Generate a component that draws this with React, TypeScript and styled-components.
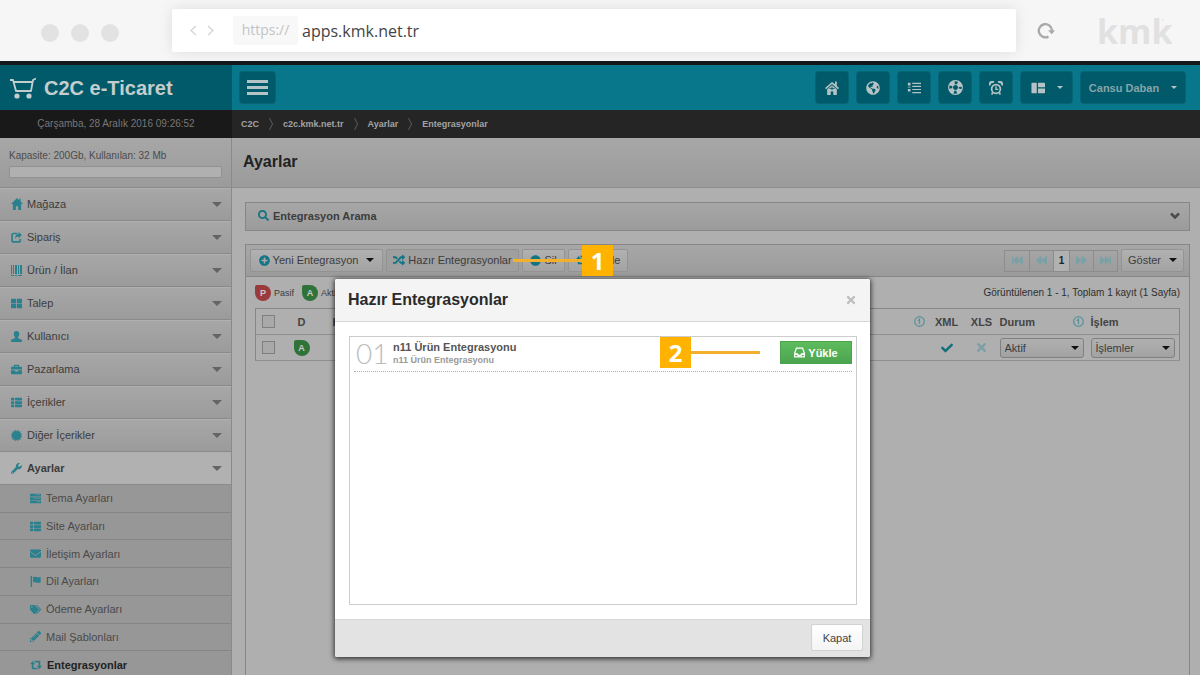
import React, { ReactNode, useState } from "react";
import styled, { createGlobalStyle, css } from "styled-components";
import {
  FaBackward, FaBriefcase, FaCertificate, FaCheck, FaEnvelope, FaFastBackward, FaFastForward,
  FaForward, FaGlobeAmericas, FaMinusCircle, FaPencilAlt, FaPlusCircle, FaRandom, FaSearch,
  FaTags, FaThLarge, FaThList, FaTimes, FaWrench,
} from "react-icons/fa";

const sans = '"Liberation Sans", Arial, sans-serif';
const human = '"Open Sans", "Noto Sans", sans-serif';
const teal = "#2b808d";

const GlobalStyle = createGlobalStyle`
  *, *::before, *::after { box-sizing: border-box; }
  html, body, #root { height: 100%; }
  body { margin: 0; font-family: ${sans}; font-size: 11px; line-height: 16px; color: #3c3c3c; background: #afafaf; overflow: hidden; }
  button, input, select { font: inherit; color: inherit; margin: 0; }
  button { cursor: pointer; padding: 0; border: 0; background: none; }
  a { color: inherit; text-decoration: none; }
  ul, ol { list-style: none; margin: 0; padding: 0; }
  h1, h2, h3, p { margin: 0; }
  svg { display: block; flex: none; }
`;

/* ---------- browser bar ---------- */

const Page = styled.div`
  position: relative;
  display: flex;
  flex-direction: column;
  min-height: 100%;
`;
const Browser = styled.header`
  display: flex;
  align-items: center;
  height: 65px;
  padding: 0 36px 0 41px;
  background: #f6f6f6;
  border-bottom: 4px solid #16191b;
`;
const Dots = styled.div`
  display: flex;
  gap: 12px;
  width: 131px;
  padding-top: 4px;
`;
const Dot = styled.span`
  width: 18px;
  height: 18px;
  border-radius: 50%;
  background: #e2e2e2;
`;
const Address = styled.div`
  flex: 1;
  display: flex;
  align-items: center;
  height: 43px;
  padding-left: 18px;
  background: #fff;
  border-radius: 2px;
  box-shadow: 0 0 14px rgba(0, 0, 0, 0.1);
`;
const History = styled.div`
  display: flex;
  gap: 10px;
  width: 43px;
  color: #d6d6d6;
`;
const Scheme = styled.span`
  height: 29px;
  width: 65px;
  text-align: center;
  border-radius: 3px;
  background: #f8f8f8;
  color: #c4c4c4;
  font: 14px/28px ${human};
`;
const Url = styled.input`
  flex: 1;
  min-width: 0;
  padding: 0 0 0 4px;
  border: 0;
  outline: 0;
  background: none;
  && { font: 16px/24px ${human}; color: #444; }
`;
const Reload = styled.button`
  width: 81px;
  padding-left: 21px;
  color: #a9a9a9;
`;
const Brand = styled.div`
  position: relative;
  width: 67px;
  color: #e1e1e1;
  font: bold 34px/44px ${human};
  &::after {
    content: "";
    position: absolute;
    top: 10px;
    right: 0;
    width: 2px;
    height: 2px;
    border-radius: 50%;
    background: #e6e6e6;
  }
`;

/* ---------- application frame ---------- */

const Frame = styled.div`
  flex: 1;
  display: grid;
  grid-template-columns: 232px minmax(0, 1fr);
  grid-template-rows: 45px 28px minmax(0, 1fr);
`;
const Logo = styled.div`
  display: flex;
  align-items: center;
  gap: 8px;
  padding-left: 9px;
  background: #015a69;
  color: #c3cdce;
  h1 { font-size: 20px; line-height: 24px; }
`;
const TopBar = styled.div`
  display: flex;
  align-items: center;
  gap: 9px;
  padding: 0 15px 0 8px;
  background: #08778b;
`;
const TopButton = styled.button<{ $w?: number; $push?: boolean }>`
  display: flex;
  align-items: center;
  justify-content: center;
  gap: 12px;
  width: ${(p) => p.$w ?? 32}px;
  height: 31px;
  border-radius: 3px;
  background: #015a69;
  box-shadow: 0 0 0 1px rgba(0, 70, 84, 0.35);
  && { color: #b4c3c5; font-weight: bold; }
  ${(p) => p.$push && css`margin-right: auto;`}
`;
const UserName = styled.span`
  color: #87a4a9;
`;
const Caret = styled.span<{ $size?: number }>`
  flex: none;
  width: 0;
  height: 0;
  border: ${(p) => p.$size ?? 4}px solid transparent;
  border-top-color: currentColor;
  border-bottom: 0;
`;
const Clock = styled.div`
  padding: 6px 0;
  background: #191919;
  color: #777;
  font-size: 10px;
  text-align: center;
`;
const Crumbs = styled.nav`
  display: flex;
  align-items: center;
  gap: 10px;
  padding-left: 9px;
  background: #252525;
  color: #a3a3a3;
  font-size: 9px;
  font-weight: bold;
  svg { color: #5c5c5c; }
`;

/* ---------- sidebar ---------- */

const grad = "linear-gradient(#a7a7a7, #9b9b9b)";

const Sidebar = styled.aside`
  border-right: 1px solid #8a8a8a;
`;
const Capacity = styled.div`
  height: 50px;
  padding: 10px 9px 0;
  background: ${grad};
  border-bottom: 1px solid #8a8a8a;
  color: #4c4c4c;
  font-size: 10px;
`;
const Meter = styled.div`
  height: 12px;
  margin-top: 2px;
  border: 1px solid #929292;
  border-radius: 2px;
  background: #b0b0b0;
`;
const MenuLink = styled.a<{ $open?: boolean }>`
  display: grid;
  grid-template-columns: 11px 1fr auto;
  align-items: center;
  gap: 5px;
  height: 33px;
  padding: 0 9px 1px 11px;
  border-top: 1px solid #b0b0b0;
  border-bottom: 1px solid #8a8a8a;
  background: ${grad};
  svg { color: ${teal}; }
  span:last-child { color: #646464; }
  ${(p) => p.$open && css`
    font-weight: bold;
    background: #b1b1b1;
  `}
`;
const SubMenu = styled.ul`
  display: grid;
  grid-auto-rows: 1fr;
  height: 194px;
  background: #979797;
`;
const SubLink = styled.a<{ $active?: boolean }>`
  display: flex;
  align-items: center;
  gap: 5px;
  height: 100%;
  padding-left: 30px;
  border-bottom: 1px solid #858585;
  color: #4a4a4a;
  svg { color: ${teal}; }
  ${(p) => p.$active && css`
    color: #222;
    font-weight: bold;
  `}
`;

/* ---------- content ---------- */

const Main = styled.main`
  display: flex;
  flex-direction: column;
`;
const Heading = styled.div`
  height: 50px;
  padding: 12px 11px;
  background: ${grad};
  border-bottom: 1px solid #8f8f8f;
  color: #222;
  h2 { font-size: 16px; line-height: 24px; }
`;
const Content = styled.div`
  flex: 1;
  display: flex;
  flex-direction: column;
  gap: 13px;
  padding: 14px 10px 0 13px;
`;
const SearchPanel = styled.button`
  display: flex;
  align-items: center;
  gap: 4px;
  height: 29px;
  padding: 0 9px 2px 12px;
  border: 1px solid #868686;
  background: ${grad};
  && { font-weight: bold; }
  svg { color: #0f7383; }
  svg:last-child { margin-left: auto; color: #4c4c4c; }
`;
const ListPanel = styled.section`
  flex: 1;
  border: 1px solid #868686;
  border-bottom: 0;
`;
const Toolbar = styled.div`
  display: flex;
  align-items: center;
  gap: 3px;
  height: 32px;
  padding: 0 5px 0 4px;
  background: ${grad};
  border-bottom: 1px solid #868686;
`;
const ToolButton = styled.button<{ $w: number; $flat?: boolean }>`
  display: flex;
  align-items: center;
  justify-content: center;
  gap: 3px;
  width: ${(p) => p.$w}px;
  height: 23px;
  padding-bottom: 1px;
  border: 1px solid #939393;
  border-radius: 2px;
  background: ${(p) => (p.$flat ? "#9f9f9f" : "linear-gradient(#b1b1b1, #a3a3a3)")};
  svg { color: #127484; }
  span:last-child:not(:only-of-type) { margin-left: 5px; color: #111; }
`;
const Anchor = styled.div`
  position: relative;
  z-index: 1;
`;
const Pager = styled.div`
  display: flex;
  margin-left: auto;
  border: 1px solid #8c8c8c;
`;
const PagerButton = styled.button<{ $current?: boolean }>`
  display: grid;
  place-items: center;
  width: ${(p) => (p.$current ? 16 : 24)}px;
  height: 20px;
  border-left: 1px solid #8c8c8c;
  &:first-child { border-left: 0; }
  && { color: #7ba0a6; }
  ${(p) => p.$current && css`
    background: #b1b1b1;
    && { color: #222; font-size: 10px; font-weight: bold; }
  `}
`;
const Legend = styled.div`
  display: flex;
  align-items: center;
  gap: 3px;
  height: 31px;
  padding: 0 9px;
  font-size: 10px;
  span + i { margin-left: 5px; }
  p { margin-left: auto; color: #2e2e2e; }
`;
const Badge = styled.i<{ $tone: string }>`
  display: grid;
  place-items: center;
  width: 16px;
  height: 16px;
  border-radius: 2px 8px 8px 8px;
  background: ${(p) => p.$tone};
  color: #c8c8c8;
  font: bold 9px/16px ${sans};
`;
const LegendText = styled.span`
  font-size: 9px;
`;
const Grid = styled.table`
  width: calc(100% - 18px);
  margin: 0 9px;
  border-collapse: collapse;
  table-layout: fixed;
  border: 1px solid #868686;
  th, td { padding: 0; height: 26px; text-align: left; border-bottom: 1px solid #8f8f8f; }
  th { color: #444; }
`;
const Center = styled.div`
  display: flex;
  justify-content: center;
`;
const HeadCell = styled.div`
  display: flex;
  align-items: center;
  justify-content: space-between;
  padding: 0 7px 0 0;
`;
const NameHead = styled.div`
  padding-left: 11px;
`;
const Tick = styled.input`
  appearance: none;
  display: block;
  width: 13px;
  height: 13px;
  && { margin: 0 auto 0 6px; }
  border: 1px solid #7f7f7f;
  background: #a9a9a9;
`;
const Picker = styled.div`
  display: grid;
  align-items: center;
  width: 84px;
  > * { grid-area: 1 / 1; }
  > span { justify-self: end; margin-right: 5px; color: #111; pointer-events: none; }
`;
const Select = styled.select`
  appearance: none;
  width: 100%;
  height: 20px;
  padding: 0 4px;
  border: 1px solid #808080;
  border-radius: 3px;
  background: linear-gradient(#b0b0b0, #a2a2a2);
`;

/* ---------- dialog ---------- */

const Layer = styled.div`
  position: absolute;
  inset: 0;
  display: flex;
  justify-content: center;
  align-items: flex-start;
  padding: 279px 0 0 5px;
`;
const Dialog = styled.section`
  width: 535px;
  background: #fff;
  border-radius: 2px;
  box-shadow: 0 1px 5px 1px rgba(0, 0, 0, 0.7);
`;
const DialogHead = styled.header`
  display: flex;
  justify-content: space-between;
  align-items: center;
  height: 43px;
  padding: 0 13px;
  border-bottom: 1px solid #d6d6d6;
  border-radius: 2px 2px 0 0;
  background: #f4f4f4;
  color: #2b2b2b;
  h3 { font-size: 16px; line-height: 24px; }
  svg { color: #bdbdbd; }
`;
const DialogBody = styled.div`
  padding: 14px 13px 14px 14px;
`;
const Items = styled.ol`
  height: 269px;
  padding: 2px 4px;
  border: 1px solid #ccc;
`;
const Item = styled.li`
  display: grid;
  grid-template-columns: 33px 1fr auto;
  align-items: start;
  gap: 6px;
  height: 33px;
  padding-top: 2px;
  border-bottom: 1px dotted #b0b0b0;
`;
const Index = styled.span`
  padding-left: 2px;
  color: #bdbdbd;
  font: 300 28px/24px Lato, sans-serif;
`;
const ItemText = styled.div`
  color: #555;
  font-weight: bold;
  line-height: 13px;
  small { display: block; color: #999; font-size: 9px; }
`;
const LoadButton = styled.button`
  display: flex;
  align-items: center;
  justify-content: center;
  gap: 3px;
  width: 72px;
  height: 23px;
  border: 1px solid #4ba34e;
  background: linear-gradient(#5dbb5d, #4ca550);
  && { color: #fff; font-weight: bold; }
`;
const DialogFoot = styled.footer`
  display: flex;
  justify-content: flex-end;
  align-items: center;
  height: 38px;
  padding: 0 7px 2px;
  border-top: 1px solid #d8d8d8;
  border-radius: 0 0 2px 2px;
  background: #e3e3e3;
`;
const CloseButton = styled.button`
  width: 52px;
  height: 27px;
  border: 1px solid #d2d2d2;
  border-radius: 2px;
  background: linear-gradient(#fff, #f4f4f4);
  && { color: #444; }
`;

/* ---------- numbered callouts ---------- */

const Callout = styled.div<{ $x: number; $flip?: boolean }>`
  position: absolute;
  top: -4px;
  left: ${(p) => p.$x}px;
  display: flex;
  flex-direction: ${(p) => (p.$flip ? "row-reverse" : "row")};
  align-items: center;
  pointer-events: none;
  b {
    width: 31px;
    height: 31px;
    background: #ffb300;
    color: #fff;
    font: bold 24px/31px ${human};
    text-align: center;
  }
  &::before {
    content: "";
    width: 69px;
    height: 3px;
    background: #f2b02c;
  }
`;

/* ---------- drawings ---------- */

const Svg = ({ s = 14, box = 16, children }: { s?: number; box?: number; children: ReactNode }) => (
  <svg width={s} height={s} viewBox={`0 0 ${box} ${box}`} fill="currentColor" aria-hidden="true">{children}</svg>
);
const CartIcon = () => (
  <svg width="27" height="22" viewBox="0 0 27 22" fill="none" stroke="currentColor" strokeWidth="1.800" aria-hidden="true">
    <path d="M1 3h3l3 11h15L24 3l3-1.500M5 5h18" strokeLinejoin="round" />
    <circle cx="8" cy="19" r="2.600" fill="currentColor" stroke="none" />
    <circle cx="20" cy="19" r="2.600" fill="currentColor" stroke="none" />
  </svg>
);
const BarsIcon = () => (
  <svg width="21" height="15" viewBox="0 0 21 15" fill="#b4c3c5" aria-hidden="true">
    <path d="M0 0h21v3H0zM0 6h21v3H0zM0 12h21v3H0z" />
  </svg>
);
const HouseIcon = () => (
  <Svg><path d="M8 1 0 8l1.200 1.300L8 3.400l6.800 5.900L16 8l-2.500-2.300V.5h-2v3.300z" /><path d="M8 4.800 2.500 9.500V16h4v-4h3v4h4V9.500z" /><path d="M5 8.500h6M8 6.500v4" stroke="#015a69" /></Svg>
);
const ListIcon = () => (
  <Svg><path d="M1 2h3v3H1zM1 9h3v3H1zM6 2h10v1.400H6zM6 5.500h10v1.400H6zM1 6.500h3v.8H1zM6 9h10v1.400H6zM6 12.500h10v1.400H6z" /></Svg>
);
const BuoyIcon = () => (
  <svg width="15" height="15" viewBox="0 0 16 16" fill="none" stroke="currentColor" aria-hidden="true">
    <circle cx="8" cy="8" r="7.300" strokeWidth="1.200" />
    <circle cx="8" cy="8" r="3.200" strokeWidth="1" />
    <circle cx="8" cy="8" r="5.300" strokeWidth="4.500" strokeDasharray="5.200 3.125" strokeDashoffset="-1.560" />
  </svg>
);
const AlarmIcon = () => (
  <svg width="14" height="14" viewBox="0 0 16 16" fill="none" stroke="currentColor" strokeWidth="2" aria-hidden="true">
    <circle cx="8" cy="9" r="5" />
    <path d="M8 6v3.500h2.500" strokeWidth="1.500" />
    <path d="M4.500 13 3 15.500M11.500 13l1.500 2.500" />
    <path d="M1 5a3 3 0 0 1 4.500-3.500M15 5a3 3 0 0 0-4.500-3.500" strokeWidth="2.500" />
  </svg>
);
const LayoutIcon = () => (
  <Svg><path d="M1 2h5a.6.6 0 0 1 .6.6V14H1.500A1 1 0 0 1 .5 13V2.500zM8 2h7a1 1 0 0 1 1 1v4H8zM8 8.500h8V13a1 1 0 0 1-1 1H8z" /></Svg>
);
const HomeIcon = () => (
  <Svg s={12}><path d="M8 0 0 8h2.500v8h4v-5h3v5h4V8H16l-3-3V1h-2v2z" /></Svg>
);
const ShareIcon = () => (
  <svg width="11" height="11" viewBox="0 0 16 16" aria-hidden="true">
    <path d="M9 2.200H4a2.500 2.500 0 0 0-2.500 2.500V12A2.500 2.500 0 0 0 4 14.500h7A2.500 2.500 0 0 0 13.500 12v-2" fill="none" stroke="currentColor" strokeWidth="2.500" />
    <path d="M11 0l5 4.500L11 9V6.500C8.500 6.500 7 7.500 6 10 5.500 6 7.500 3 11 2.500z" fill="currentColor" />
  </svg>
);
const BarcodeIcon = () => (
  <svg width="11" height="11" viewBox="0 0 11 11" fill="currentColor" aria-hidden="true">
    <path d="M0 0h1v9H0zM2 0h1v9H2zM4 0h2v9H4zM7 0h1v9H7zM9 0h2v9H9zM0 10h3v1H0zM4 10h2v1H4zM7 10h4v1H7z" />
  </svg>
);
const UserIcon = () => (
  <Svg s={11}><path d="M8 0c2.500 0 4 1.700 4 4.200 0 2-.7 3.500-1.700 4.600v1.700L15 12.500c.7.300 1 1 1 1.700V16H0v-1.800c0-.7.3-1.400 1-1.700l4.700-2V8.800C4.700 7.700 4 6.200 4 4.200 4 1.700 5.500 0 8 0z" /></Svg>
);
const FlagIcon = () => (
  <Svg s={11}><path d="M1 0h2v16H1zM4.500 1.500c3-1.500 5 1.500 11 0v8c-6 1.500-8-1.500-11 0z" /></Svg>
);
const RetweetIcon = () => (
  <Svg s={12}><path d="M3.500 2.500 7 7H4.700v4.500H9l2 2.300H2.400V7H0zM12.500 13.500 9 9h2.300V4.500H7L5 2.200h8.600V9H16z" /></Svg>
);
const ServerIcon = () => (
  <Svg s={11}><path d="M0 1h16v4H0zM0 6h16v4H0zM0 11h16v4H0z" /><path d="M8 2.600h7M5 7.600h10M10 12.600h5" stroke="#6d9499" strokeWidth="1.200" /></Svg>
);
const InfoIcon = () => (
  <svg width="11" height="11" viewBox="0 0 16 16" fill="none" stroke="#5b939b" strokeWidth="1.800" aria-hidden="true">
    <circle cx="8" cy="8" r="7" /><path d="M8 12V5M5.800 7 8 4.500V8" />
  </svg>
);
const TrayIcon = () => (
  <svg width="11" height="11" viewBox="0 0 16 16" fill="none" stroke="currentColor" strokeWidth="1.800" aria-hidden="true">
    <path d="M3.500 1.500h9L15 9v5.500H1V9z" /><path d="M1 10.500h4l1.200 2h3.600l1.200-2h4" strokeWidth="2.500" />
  </svg>
);
const ReloadIcon = () => (
  <svg width="18" height="18" viewBox="0 0 18 18" aria-hidden="true">
    <path d="M11.500 14.600A6.600 6.600 0 1 1 15 8.500" fill="none" stroke="currentColor" strokeWidth="2.400" />
    <path d="M11 8.200h7l-3.200 4z" fill="currentColor" />
  </svg>
);
const ChevronIcon = () => (
  <svg width="10" height="8" viewBox="0 0 10 8" fill="none" stroke="currentColor" strokeWidth="2.600" aria-hidden="true"><path d="M1 1.500 5 5.500l4-4" /></svg>
);
const Angle = ({ left }: { left?: boolean }) => (
  <svg width="7" height="11" viewBox="0 0 7 11" fill="none" stroke="currentColor" strokeWidth="1.500" aria-hidden="true">
    <path d={left ? "M6 1 1 5.500 6 10" : "M1 1l5 4.500L1 10"} />
  </svg>
);
const CrumbMark = () => (
  <svg width="4" height="12" viewBox="0 0 4 12" fill="none" stroke="currentColor" aria-hidden="true"><path d="M.5 0 3.500 6l-3 6" /></svg>
);

/* ---------- data ---------- */

const menu: { label: string; icon: ReactNode; open?: boolean }[] = [
  { label: "Mağaza", icon: <HomeIcon /> },
  { label: "Sipariş", icon: <ShareIcon /> },
  { label: "Ürün / İlan", icon: <BarcodeIcon /> },
  { label: "Talep", icon: <FaThLarge size={11} /> },
  { label: "Kullanıcı", icon: <UserIcon /> },
  { label: "Pazarlama", icon: <FaBriefcase size={11} /> },
  { label: "İçerikler", icon: <FaThList size={11} /> },
  { label: "Diğer İçerikler", icon: <FaCertificate size={11} /> },
  { label: "Ayarlar", icon: <FaWrench size={11} />, open: true },
];
const subMenu: { label: string; icon: ReactNode; active?: boolean }[] = [
  { label: "Tema Ayarları", icon: <ServerIcon /> },
  { label: "Site Ayarları", icon: <FaThList size={11} /> },
  { label: "İletişim Ayarları", icon: <FaEnvelope size={11} /> },
  { label: "Dil Ayarları", icon: <FlagIcon /> },
  { label: "Ödeme Ayarları", icon: <FaTags size={11} /> },
  { label: "Mail Şablonları", icon: <FaPencilAlt size={11} /> },
  { label: "Entegrasyonlar", icon: <RetweetIcon />, active: true },
];
const crumbs = ["C2C", "c2c.kmk.net.tr", "Ayarlar", "Entegrasyonlar"];
const shortcuts: [string, ReactNode][] = [
  ["Ana sayfa", <HouseIcon />],
  ["Site", <FaGlobeAmericas size={14} />],
  ["Liste", <ListIcon />],
  ["Destek", <BuoyIcon />],
  ["Hatırlatıcı", <AlarmIcon />],
];
const columns = [26, 40, 0, 20, 34, 36, 91, 89];

export default function App() {
  const [url, setUrl] = useState("apps.kmk.net.tr");
  return (
    <Page>
      <GlobalStyle />
      <Browser>
        <Dots><Dot /><Dot /><Dot /></Dots>
        <Address>
          <History>
            <button aria-label="Geri"><Angle left /></button>
            <button aria-label="İleri"><Angle /></button>
          </History>
          <Scheme>https://</Scheme>
          <Url aria-label="Adres" value={url} onChange={(e) => setUrl(e.target.value)} />
        </Address>
        <Reload aria-label="Yenile"><ReloadIcon /></Reload>
        <Brand>kmk</Brand>
      </Browser>

      <Frame>
        <Logo><CartIcon /><h1>C2C e-Ticaret</h1></Logo>
        <TopBar>
          <TopButton $w={35} $push aria-label="Menü"><BarsIcon /></TopButton>
          {shortcuts.map(([name, icon]) => <TopButton key={name} aria-label={name}>{icon}</TopButton>)}
          <TopButton $w={51} aria-label="Görünüm"><LayoutIcon /><Caret $size={3} /></TopButton>
          <TopButton $w={104}><UserName>Cansu Daban</UserName><Caret $size={3} /></TopButton>
        </TopBar>

        <Clock>Çarşamba, 28 Aralık 2016 09:26:52</Clock>
        <Crumbs aria-label="Konum">
          {crumbs.map((c, i) => (
            <React.Fragment key={c}>{i > 0 && <CrumbMark />}<a href="#">{c}</a></React.Fragment>
          ))}
        </Crumbs>

        <Sidebar>
          <Capacity>Kapasite: 200Gb, Kullanılan: 32 Mb<Meter /></Capacity>
          <nav>
            {menu.map((m) => (
              <MenuLink key={m.label} href="#" $open={m.open}>{m.icon}<span>{m.label}</span><Caret $size={5} /></MenuLink>
            ))}
            <SubMenu>
              {subMenu.map((m) => (
                <li key={m.label}><SubLink href="#" $active={m.active}>{m.icon}{m.label}</SubLink></li>
              ))}
            </SubMenu>
          </nav>
        </Sidebar>

        <Main>
          <Heading><h2>Ayarlar</h2></Heading>
          <Content>
            <SearchPanel><FaSearch size={11} />Entegrasyon Arama<ChevronIcon /></SearchPanel>
            <ListPanel>
              <Toolbar>
                <ToolButton $w={133}><FaPlusCircle size={11} /><span>Yeni Entegrasyon</span><Caret /></ToolButton>
                <Anchor>
                  <ToolButton $w={133} $flat><FaRandom size={12} />Hazır Entegrasyonlar</ToolButton>
                  <Callout $x={127}><b>1</b></Callout>
                </Anchor>
                <ToolButton $w={43}><FaMinusCircle size={11} />Sil</ToolButton>
                <ToolButton $w={60}><RetweetIcon />Yenile</ToolButton>
                <Pager>
                  <PagerButton aria-label="İlk"><FaFastBackward size={11} /></PagerButton>
                  <PagerButton aria-label="Önceki"><FaBackward size={11} /></PagerButton>
                  <PagerButton $current>1</PagerButton>
                  <PagerButton aria-label="Sonraki"><FaForward size={11} /></PagerButton>
                  <PagerButton aria-label="Son"><FaFastForward size={11} /></PagerButton>
                </Pager>
                <ToolButton $w={63}><span>Göster</span><Caret /></ToolButton>
              </Toolbar>
              <Legend>
                <Badge $tone="#9b3a3c">P</Badge><LegendText>Pasif</LegendText>
                <Badge $tone="#2f7338">A</Badge><LegendText>Aktif</LegendText>
                <p>Görüntülenen 1 - 1, Toplam 1 kayıt (1 Sayfa)</p>
              </Legend>
              <Grid>
                <colgroup>{columns.map((w, i) => <col key={i} width={w || undefined} />)}</colgroup>
                <thead>
                  <tr>
                    <th><Tick type="checkbox" aria-label="Tümünü seç" /></th>
                    <th><Center>D</Center></th>
                    <th><NameHead>Kod</NameHead></th>
                    <th><Center><InfoIcon /></Center></th>
                    <th><Center>XML</Center></th>
                    <th><Center>XLS</Center></th>
                    <th><HeadCell>Durum<InfoIcon /></HeadCell></th>
                    <th>İşlem</th>
                  </tr>
                </thead>
                <tbody>
                  <tr>
                    <td><Tick type="checkbox" aria-label="Kaydı seç" /></td>
                    <td><Center><Badge $tone="#2f7338">A</Badge></Center></td>
                    <td />
                    <td />
                    <td><Center><FaCheck size={12} color="#0f6f7d" /></Center></td>
                    <td><Center><FaTimes size={13} color="#7ba0a6" /></Center></td>
                    <td><Picker><Select aria-label="Durum" defaultValue="Aktif"><option>Aktif</option><option>Pasif</option></Select><Caret /></Picker></td>
                    <td><Picker><Select aria-label="İşlem"><option>İşlemler</option></Select><Caret /></Picker></td>
                  </tr>
                </tbody>
              </Grid>
            </ListPanel>
          </Content>
        </Main>
      </Frame>

      <Layer>
        <Dialog role="dialog" aria-labelledby="dialog-title">
          <DialogHead>
            <h3 id="dialog-title">Hazır Entegrasyonlar</h3>
            <button aria-label="Pencereyi kapat"><FaTimes size={12} /></button>
          </DialogHead>
          <DialogBody>
            <Items>
              <Item>
                <Index>01</Index>
                <ItemText>n11 Ürün Entegrasyonu<small>n11 Ürün Entegrasyonu</small></ItemText>
                <Anchor>
                  <LoadButton><TrayIcon />Yükle</LoadButton>
                  <Callout $x={-120} $flip><b>2</b></Callout>
                </Anchor>
              </Item>
            </Items>
          </DialogBody>
          <DialogFoot><CloseButton>Kapat</CloseButton></DialogFoot>
        </Dialog>
      </Layer>
    </Page>
  );
}
